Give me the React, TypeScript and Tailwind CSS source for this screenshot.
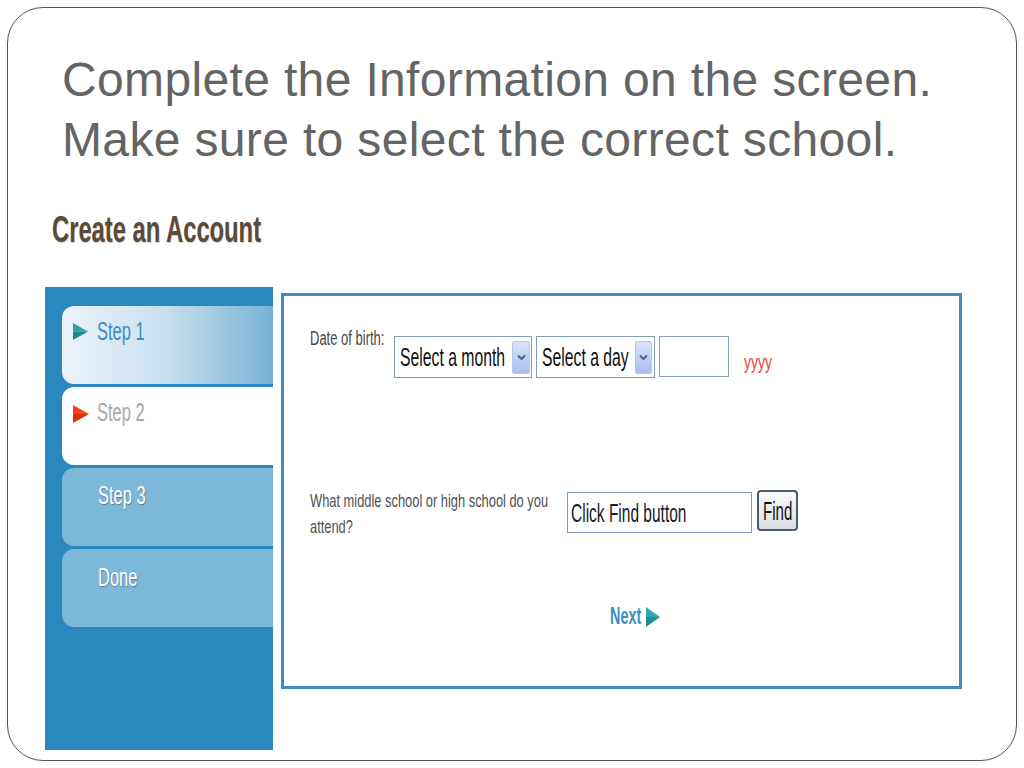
import React from "react";

type NProps = { children: React.ReactNode; s?: string; className?: string };
const N = ({ children, s = "scale-x-[0.66]", className = "" }: NProps) => (
  <span className={`inline-block origin-left whitespace-nowrap ${s} ${className}`}>{children}</span>
);

const Tri = ({ light, dark, w, h }: { light: string; dark: string; w: number; h: number }) => (
  <svg width={w} height={h} viewBox={`0 0 ${w} ${h}`} className="block shrink-0">
    <polygon points={`0,0 ${w},${h / 2} 0,${h / 2}`} fill={light} />
    <polygon points={`0,${h / 2} ${w},${h / 2} 0,${h}`} fill={dark} />
  </svg>
);

const DropBtn = ({ w }: { w: number }) => (
  <div
    className="h-[33px] shrink-0 rounded-[2px] border border-[#b5c6ea] bg-gradient-to-b from-[#d9e4fb] to-[#a9bff0] flex items-center justify-center"
    style={{ width: w }}
  >
    <svg width="9" height="7" viewBox="0 0 9 7">
      <polyline points="1,1.5 4.5,5 8,1.5" fill="none" stroke="#4d5f86" strokeWidth="2" />
    </svg>
  </div>
);

export default function App() {
  return (
    <div className="w-[1024px] h-[768px] bg-white p-[7px] font-['Liberation_Sans',Arial,sans-serif]">
      <div className="h-full rounded-[36px] border border-[#555] flex flex-col">
        {/* Title */}
        <div className="pl-[54px] pt-[42px] text-[48px] leading-[60px] tracking-[0.35px] text-[#646464]">
          <div>Complete the Information on the screen.</div>
          <div>Make sure to select the correct school.</div>
        </div>

        {/* Heading */}
        <div className="pl-[44px] mt-[40px] h-[40px] text-[36px] leading-[40px] font-bold text-[#5b4a38] [text-shadow:1px_1px_1px_rgba(0,0,0,0.2)]">
          <N>Create an Account</N>
        </div>

        {/* Screenshot */}
        <div className="pl-[37px] mt-[37px] flex items-start">
          {/* Sidebar */}
          <div className="w-[228px] h-[463px] shrink-0 bg-[#2a88be] pt-[19px] pl-[17px] flex flex-col gap-[3px]">
            <div className="h-[78px] rounded-l-[12px] bg-gradient-to-r from-[#edf4fa] via-[#c6dfee] to-[#78b1d4] pt-[10px] pl-[11px] flex items-start">
              <div className="mt-[7px]">
                <Tri light="#2ba3a3" dark="#1d8585" w={15} h={17} />
              </div>
              <div className="ml-[9px] text-[25px] leading-[30px] text-[#3f8cc4]">
                <N>Step 1</N>
              </div>
            </div>
            <div className="h-[78px] rounded-l-[12px] bg-white pt-[10px] pl-[11px] flex items-start">
              <div className="mt-[8px]">
                <Tri light="#f5451a" dark="#d93208" w={16} h={18} />
              </div>
              <div className="ml-[8px] text-[25px] leading-[30px] text-[#a8a8a8]">
                <N>Step 2</N>
              </div>
            </div>
            <div className="h-[78px] rounded-l-[12px] bg-[#7db7d9] pt-[12px] pl-[36px] text-[25px] leading-[30px] text-white [text-shadow:1px_1px_1px_#5f7f95]">
              <N>Step 3</N>
            </div>
            <div className="h-[78px] rounded-l-[12px] bg-[#7db7d9] pt-[13px] pl-[36px] text-[25px] leading-[30px] text-white [text-shadow:1px_1px_1px_#5f7f95]">
              <N>Done</N>
            </div>
          </div>

          {/* Form box */}
          <div className="ml-[8px] mt-[6px] w-[681px] h-[396px] shrink-0 border-[3px] border-[#3b8dc2] bg-white pl-[26px] pt-[30px]">
            {/* Row 1 */}
            <div className="flex items-start">
              <div className="w-[84px] shrink-0 text-[20px] leading-[24px] text-[#474747]">
                <N s="scale-x-[0.65]">Date of birth:</N>
              </div>
              <div className="mt-[10px] w-[138px] h-[42px] shrink-0 border border-[#7f9db9] bg-white flex items-center pl-[5px] pr-[1px]">
                <div className="flex-1 min-w-0 text-[25px] leading-[30px] text-[#111]">
                  <N s="scale-x-[0.63]">Select a month</N>
                </div>
                <DropBtn w={18} />
              </div>
              <div className="ml-[4px] mt-[10px] w-[119px] h-[42px] shrink-0 border border-[#7f9db9] bg-white flex items-center pl-[5px] pr-[2px]">
                <div className="flex-1 min-w-0 text-[25px] leading-[30px] text-[#111]">
                  <N s="scale-x-[0.63]">Select a day</N>
                </div>
                <DropBtn w={17} />
              </div>
              <div className="ml-[4px] mt-[10px] w-[70px] h-[41px] shrink-0 border border-[#8aa0b8] bg-white" />
              <div className="ml-[15px] mt-[24px] text-[20px] leading-[24px] text-[#e8432f]">
                <N s="scale-x-[0.7]">yyyy</N>
              </div>
            </div>

            {/* Row 2 */}
            <div className="mt-[110px] flex items-start">
              <div className="w-[257px] shrink-0 text-[17.5px] leading-[26px] text-[#505050]">
                <N s="scale-x-[0.735]">
                  What middle school or high school do you
                  <br />
                  attend?
                </N>
              </div>
              <div className="mt-[4px] w-[185px] h-[41px] shrink-0 border border-[#7f9db9] bg-white flex items-center pl-[3px]">
                <div className="text-[25px] leading-[30px] text-[#1a1a2a]">
                  <N s="scale-x-[0.62]">Click Find button</N>
                </div>
              </div>
              <div className="ml-[5px] mt-[2px] w-[41px] h-[41px] shrink-0 rounded-[4px] border-2 border-[#4b5c70] bg-gradient-to-b from-[#fbfbfb] to-[#dcdde2] flex items-center pl-[4px]">
                <div className="text-[26px] leading-[30px] text-[#111]">
                  <N s="scale-x-[0.58]">Find</N>
                </div>
              </div>
            </div>

            {/* Row 3 */}
            <div className="mt-[62px] ml-[300px] flex items-start">
              <div className="w-[36px] shrink-0 text-[24px] leading-[28px] font-bold text-[#3d8fc0]">
                <N s="scale-x-[0.6]">Next</N>
              </div>
              <div className="mt-[5px]">
                <Tri light="#2eaaaa" dark="#1f9090" w={14} h={20} />
              </div>
            </div>
          </div>
        </div>
      </div>
    </div>
  );
}
